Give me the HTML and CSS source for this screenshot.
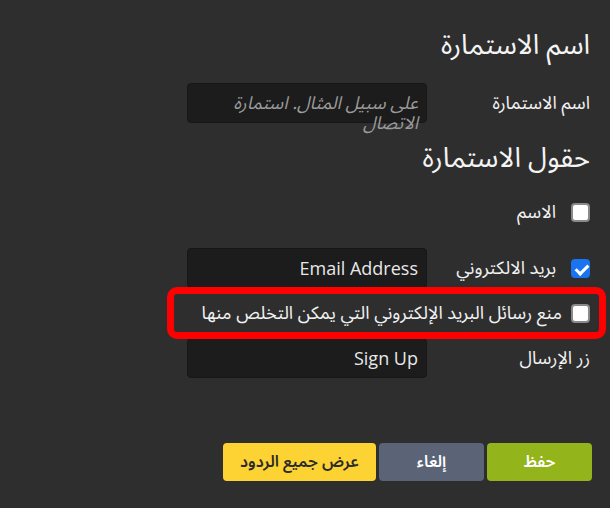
FILE: index.html
```html
<!DOCTYPE html>
<html lang="ar" dir="rtl">
  <head>
    <meta charset="utf-8">
    <title>إعدادات الاستمارة</title>
    <link rel="stylesheet" href="styles.css">
  </head>
  <body>
    <div class="page">
      <h2 class="section-title">اسم الاستمارة</h2>
      <div class="field-row">
        <label class="field-label">اسم الاستمارة</label>
        <div class="text-box placeholder">على سبيل المثال. استمارة الاتصال</div>
      </div>

      <h2 class="section-title second">حقول الاستمارة</h2>
      <div class="check-row first">
        <label class="check-label"><span class="check"></span>الاسم</label>
      </div>
      <div class="field-row email-row">
        <label class="check-label"><span class="check checked"></span>بريد الالكتروني</label>
        <div class="text-box">Email Address</div>
      </div>
      <div class="check-row highlight">
        <label class="check-label"><span class="check"></span>منع رسائل البريد الإلكتروني التي يمكن التخلص منها</label>
      </div>
      <div class="field-row submit-row">
        <label class="field-label">زر الإرسال</label>
        <div class="text-box">Sign Up</div>
      </div>

      <div class="actions">
        <button class="btn btn-save">حفظ</button>
        <button class="btn btn-cancel">إلغاء</button>
        <button class="btn btn-responses">عرض جميع الردود</button>
      </div>
    </div>
  </body>
</html>
```

FILE: styles.css
```css
body {
  margin: 0;
  background-color: #2e2e2e;
  color: #f2f2f2;
  font-family: "Noto Sans Arabic", "Open Sans", "DejaVu Sans", sans-serif;
  font-size: 18px;
}

.page {
  padding: 27px 20px 0 0;
}

.section-title {
  margin: 0;
  font-size: 27.5px;
  font-weight: normal;
  line-height: 36px;
  color: #f4f4f4;
}

.section-title.second {
  margin-top: 17px;
}

.field-row {
  display: grid;
  grid-template-columns: 163px 240px;
  align-items: center;
  height: 40px;
  margin-top: 20px;
}

.field-label {
  font-size: 18px;
}

.text-box {
  box-sizing: border-box;
  height: 40px;
  padding: 0 8px;
  background-color: #1c1c1c;
  border: 1px solid #161616;
  border-radius: 4px;
  font-family: "Open Sans", "Noto Sans Arabic", sans-serif;
  font-size: 18px;
  line-height: 38px;
  color: #e8e8e8;
}

.text-box.placeholder {
  padding-top: 9px;
  font-family: "Noto Sans Arabic", "Open Sans", sans-serif;
  line-height: 20px;
  font-style: italic;
  color: #9a9a9a;
}

.check-row {
  display: flex;
  align-items: center;
}

.check-row.first {
  margin-top: 24px;
  height: 24px;
}

.email-row {
  margin-top: 24px;
}

.highlight {
  width: 403px;
  height: 40px;
  margin: 5px -10px 0 0;
  padding: 0 10px 0 14px;
  outline: 7px solid #ff0000;
  outline-offset: -1px;
  border-radius: 4px;
}

.highlight .check-label {
  gap: 9px;
}

.submit-row {
  margin-top: 5px;
}

.check-label {
  display: flex;
  align-items: center;
  gap: 15px;
  font-size: 18px;
}

.check {
  box-sizing: border-box;
  width: 19px;
  height: 19px;
  background-color: #ffffff;
  border: 2px solid #8a8a8a;
  border-radius: 4px;
}

.check.checked {
  background-color: #1a73f0;
  border-color: #1a73f0;
  position: relative;
}

.check.checked::after {
  content: "";
  position: absolute;
  left: 5px;
  top: 1px;
  width: 5px;
  height: 10px;
  border: solid #ffffff;
  border-width: 0 3px 3px 0;
  transform: rotate(45deg);
}

.actions {
  display: flex;
  gap: 3px;
  margin-top: 65px;
  margin-right: -2px;
}

.btn {
  height: 38px;
  width: 105px;
  border: none;
  border-radius: 4px;
  font-family: "Noto Sans Arabic", "Open Sans", sans-serif;
  font-size: 16px;
  font-weight: 600;
  color: #ffffff;
  cursor: pointer;
}

.btn-save {
  background-color: #93b41a;
}

.btn-cancel {
  background-color: #5a6476;
}

.btn-responses {
  width: 153px;
  background-color: #fdd333;
  color: #2b2b2b;
}
```
